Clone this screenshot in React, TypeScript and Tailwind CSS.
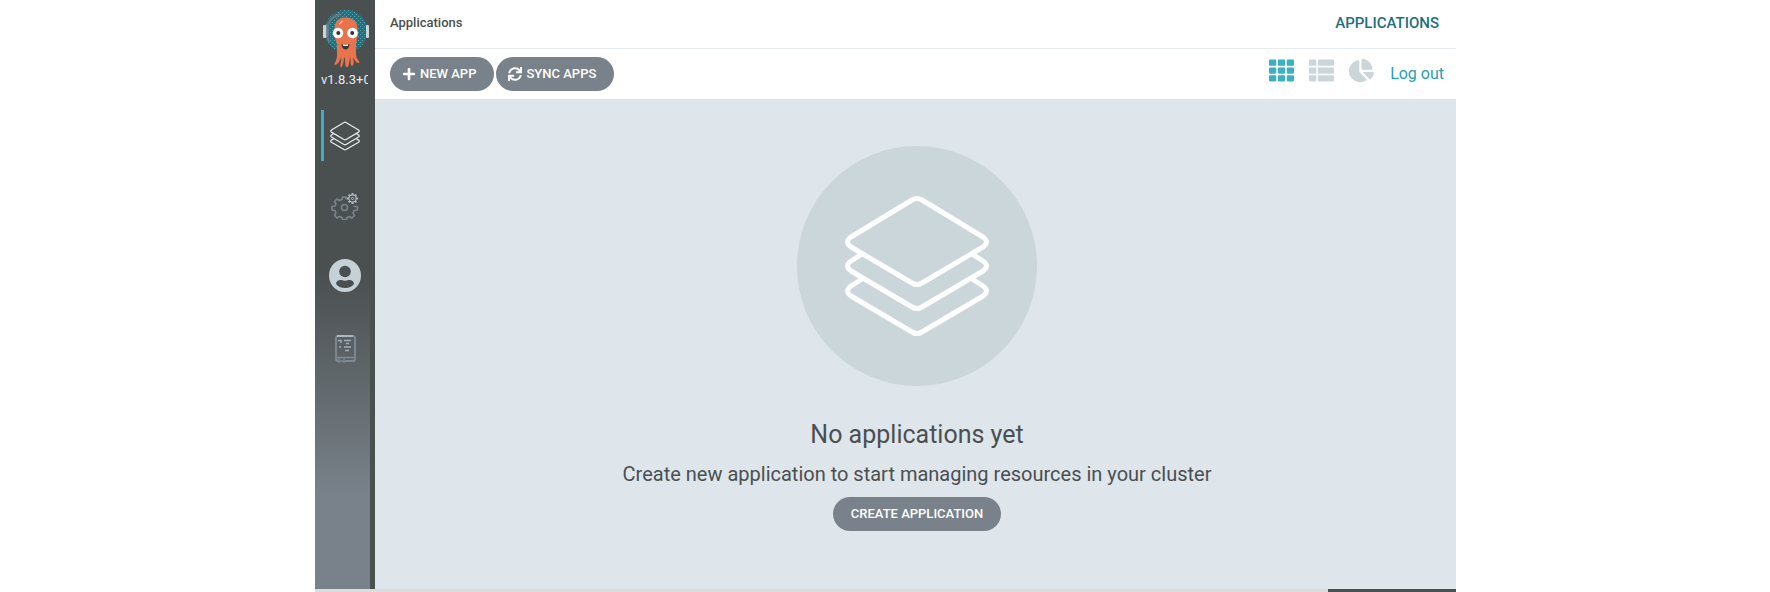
import React from 'react';
import { FaPlus, FaSync, FaTh, FaThList, FaChartPie } from 'react-icons/fa';

function LayersIcon({ className, strokeWidth }: { className: string; strokeWidth: number }) {
  return (
    <svg
      className={className}
      viewBox="0 0 146 142"
      fill="none"
      stroke="currentColor"
      strokeWidth={strokeWidth}
      strokeLinejoin="round"
      aria-hidden="true"
    >
      <path d="M68 5 Q73 2 78 5 L139 42 Q146 47 139 52 L78 88 Q73 91 68 88 L7 52 Q0 47 7 42 Z" />
      <path d="M18 59 L7 66 Q0 71 7 76 L68 112 Q73 115 78 112 L139 76 Q146 71 139 66 L128 59" />
      <path d="M18 84 L7 91 Q0 96 7 101 L68 137 Q73 140 78 137 L139 101 Q146 96 139 91 L128 84" />
    </svg>
  );
}

function Mascot() {
  return (
    <svg className="h-[60px] w-[48px]" viewBox="0 0 48 60" role="img" aria-label="Argo">
      <defs>
        <pattern id="halo" width="4" height="4" patternUnits="userSpaceOnUse">
          <rect width="4" height="4" fill="#44646a" />
          <rect width="1" height="1" fill="#3bb0c3" />
          <rect x="2" y="2" width="1" height="1" fill="#3bb0c3" />
        </pattern>
      </defs>
      <circle cx="24" cy="23" r="21.500" fill="url(#halo)" />
      <path d="M7 34 C2 21 6 9 19 6" fill="none" stroke="#6b7a82" strokeWidth="2" />
      <rect x="1" y="17" width="3.4" height="13" rx="1" fill="#c9d4da" />
      <rect x="4.4" y="19" width="2.4" height="9" fill="#768089" />
      <rect x="44" y="17" width="3" height="13" rx="1" fill="#c9d4da" />
      <path
        d="M12.500 21 C12.500 13 17 9.500 23.500 9.500 C30.500 9.500 35.500 13 35.500 21 C36.500 26 35 31 34 35 V46 C34 51 37 52 37.500 54.500 C35 56 32.500 53 31.500 49 C31 53 33 56 30 58 C28 57 29 53 28 49 C27 53 28 57 25 59.500 C22 58 24 53 22.500 49 C21 53 22 57 19 59.500 C17 58 20 54 19 49 C18 53 16 57 12.500 57 C12 55 15 53 15 47 V36 C13 31 11.500 26 12.500 21 Z"
        fill="#e9734b"
      />
      <path d="M17.500 16 L20 13.500" stroke="#f6c9b5" strokeWidth="1.4" strokeLinecap="round" />
      <circle cx="16" cy="25" r="5.300" fill="#fff" />
      <circle cx="30.500" cy="25" r="5.300" fill="#fff" />
      <circle cx="16.300" cy="25" r="2" fill="#303638" />
      <circle cx="30.200" cy="25" r="2" fill="#303638" />
      <path d="M19.500 36 Q24 38 27.500 36 Q27 41.500 23.500 41.500 Q20 41 19.500 36 Z" fill="#303638" />
      <path d="M21 36.300 Q24 37.500 26 36.300 V38 H21 Z" fill="#fff" />
    </svg>
  );
}

function GearsIcon() {
  const teeth = [0, 45, 90, 135, 180, 225, 270, 315];
  return (
    <svg className="size-7" viewBox="0 0 28 28" fill="none" stroke="currentColor" aria-hidden="true">
      <path
        d="M15 7.500 V5 H11.500 L11 7.500 L8.500 8.500 L6 7 L3.500 9.500 L5 12 L4 14 L1 14.500 V18 L4 18.500 L5 21 L3.500 23.500 L6 26 L8.500 24.500 L11 25.500 L11.500 27.500 H15.500 L16 25.500 L18.500 24.500 L21 26 L23.500 23.500 L22 21 L23 18.500 L26.500 18 V14.500 L22.500 14.500"
        strokeWidth="1.600"
        strokeLinejoin="round"
      />
      <circle cx="13.500" cy="15.500" r="3" strokeWidth="1.500" />
      <g stroke="#b3bdc3">
        <circle cx="21.500" cy="6.500" r="3.600" strokeWidth="1.200" />
        <circle cx="21.500" cy="6.500" r="1.100" />
        {teeth.map((angle) => (
          <path key={angle} d="M21.500 2.800 V1" strokeWidth="2" transform={`rotate(${angle} 21.5 6.5)`} />
        ))}
      </g>
    </svg>
  );
}

function UserIcon() {
  return (
    <svg className="h-[33px] w-8" viewBox="0 0 32 33" aria-hidden="true">
      <ellipse cx="16" cy="16.500" rx="16" ry="16.500" fill="currentColor" />
      <circle cx="16" cy="12.500" r="5.800" fill="#4a4f50" />
      <path d="M7 25 C7 22 10 20.500 12.500 21 Q16 22.300 19.500 21 C22 20.500 25 22 25 25 C23 27.500 20 29 16 29 C12 29 9 27.500 7 25 Z" fill="#4a4f50" />
    </svg>
  );
}

function DocsIcon() {
  return (
    <svg className="h-7 w-[21px]" viewBox="0 0 21 28" fill="none" stroke="currentColor" aria-hidden="true">
      <path d="M3 1 H18 Q20 1 20 3 V24 Q20 26 18 26 H10 M3 1 Q1 1 1 3 V24 Q1 26 3 26" strokeWidth="1.800" />
      <path d="M2 1 H18" stroke="#dee6eb" />
      <path d="M1 22.500 H20 M4 22.500 V27 L6.500 25.500 L9 27 V22.500" strokeWidth="1.400" />
      <path d="M3 5.500 H6 V8 M4 12 H6 M9 5.500 H16 M11 8.500 H14 M9 12 H16 M10 15.500 H14" stroke="#a4afb6" strokeWidth="1.400" />
    </svg>
  );
}

const pill =
  'flex h-[34px] items-center rounded-full bg-[#79828a] text-[13px] font-medium text-white';

export default function App() {
  return (
    <div className="min-h-screen bg-white pl-px font-['Roboto',sans-serif] text-[#4a4f50]">
      <div className="mx-auto flex min-h-screen w-full max-w-[1141px] flex-col">
        <div className="flex flex-1">
          <nav
            aria-label="Main"
            className="flex w-[60px] shrink-0 flex-col border-r-5 border-[#4a4f50] bg-linear-to-b from-[#4a4f50] from-46% to-[#79828a] to-84% pt-2"
          >
            <div className="flex flex-col pl-1.5">
              <div className="flex pl-px">
                <Mascot />
              </div>
              <span className="mr-0.5 overflow-hidden pt-1 text-[13px] leading-4 whitespace-nowrap text-[#e6ecf0]">
                v1.8.3+0
              </span>
            </div>
            <div className="flex flex-col gap-3 pt-[22px] pl-1.5">
              <a href="#applications" aria-label="Applications" className="flex h-[51px] items-center border-l-3 border-[#3bb0c3] pl-1.5 text-[#e6ecf0]">
                <LayersIcon className="size-[30px]" strokeWidth={6} />
              </a>
              <a href="#settings" aria-label="Settings" className="flex h-[66px] items-center pl-2.5 text-[#79858e]">
                <GearsIcon />
              </a>
              <a href="#user" aria-label="User info" className="flex h-12 items-center pl-2 text-[#c5d0d7]">
                <UserIcon />
              </a>
              <a href="#docs" aria-label="Documentation" className="flex h-[76px] items-center pl-3.5 text-[#7f8b94]">
                <DocsIcon />
              </a>
            </div>
          </nav>

          <div className="flex min-w-0 flex-1 flex-col">
            <header className="flex h-[49px] items-center justify-between border-b border-[#e6ecf0] pr-[17px] pb-0.5 pl-[15px]">
              <span className="text-[13px] font-medium">Applications</span>
              <h1 className="text-[15px] font-medium text-[#1d6f80]">APPLICATIONS</h1>
            </header>
            <div className="flex h-[51px] items-center justify-between border-b border-[#dee6eb] pr-3 pl-[15px]">
              <div className="flex gap-0.5">
                <button type="button" className={`${pill} gap-1 pr-[18px] pl-3`}>
                  <FaPlus className="size-3.5" />
                  NEW APP
                </button>
                <button type="button" className={`${pill} gap-1 pr-[18px] pl-3`}>
                  <FaSync className="size-3.5" />
                  SYNC APPS
                </button>
              </div>
              <div className="flex items-center gap-4">
                <div className="flex gap-[15px] pb-2 text-[#cbd6db]">
                  <button type="button" aria-label="Tiles" className="text-[#3bb0c3]">
                    <FaTh className="size-[25px]" />
                  </button>
                  <button type="button" aria-label="List">
                    <FaThList className="size-[25px]" />
                  </button>
                  <button type="button" aria-label="Summary">
                    <FaChartPie className="size-[25px]" />
                  </button>
                </div>
                <a href="#logout" className="text-[16px] text-[#1fa0b6]">
                  Log out
                </a>
              </div>
            </div>

            <main className="flex flex-1 flex-col items-center bg-[#dee5eb] pt-[46px] pl-[3px]">
              <div className="flex size-60 items-center justify-center rounded-full bg-[#cbd6db] text-white">
                <LayersIcon className="h-[142px] w-[146px]" strokeWidth={5} />
              </div>
              <h2 className="pt-[33px] text-[25px] leading-8">No applications yet</h2>
              <p className="pt-[9px] text-[20px] leading-7">
                Create new application to start managing resources in your cluster
              </p>
              <button type="button" className={`${pill} mt-[9px] px-[18px]`}>
                CREATE APPLICATION
              </button>
            </main>
          </div>
        </div>
        <div className="flex h-[3px] justify-end bg-[#dcdddb]">
          <div className="w-32 bg-[#4a4f50]" />
        </div>
      </div>
    </div>
  );
}
